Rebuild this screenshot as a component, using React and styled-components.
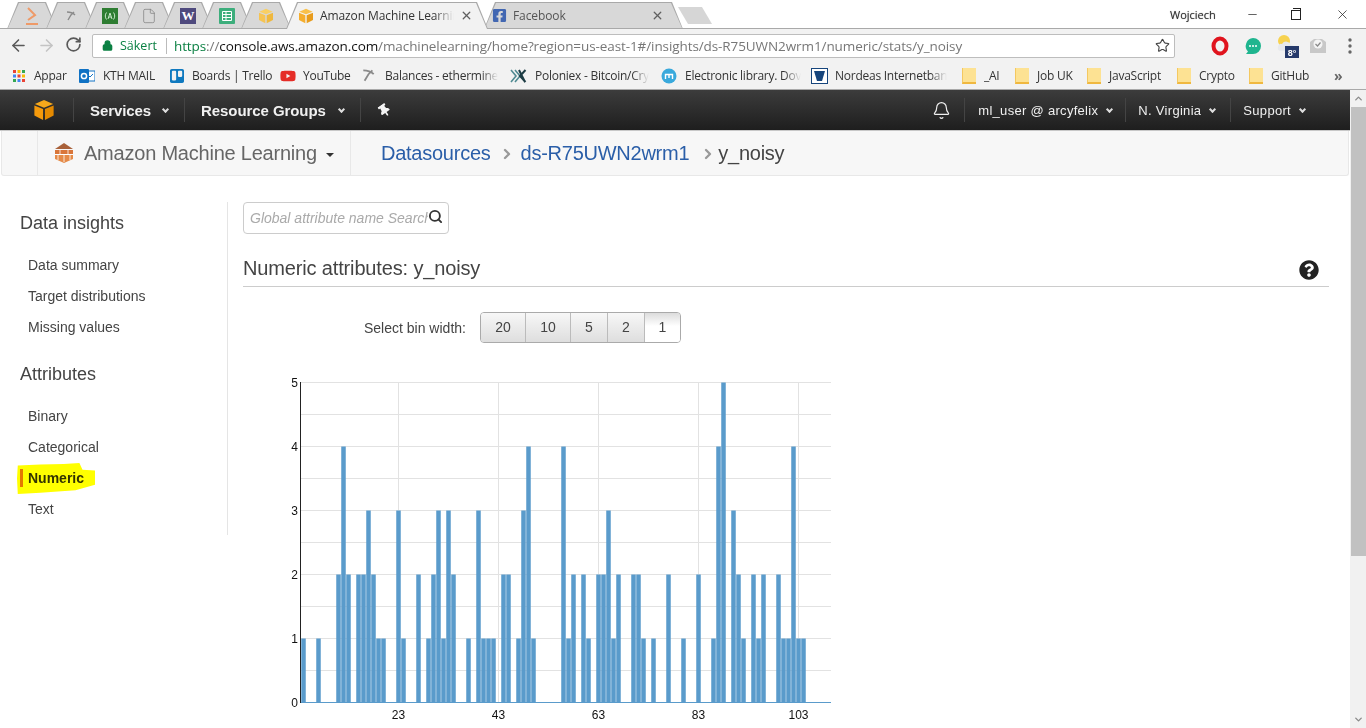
import React from 'react';
import styled, { createGlobalStyle } from 'styled-components';
import { ArrowLeft, ArrowRight, RotateCw, Star, Bell, Search, Minus, X, Lock, ChevronRight, ChevronUp, ChevronDown, File } from 'lucide-react';
import { FaFacebookSquare, FaTrello, FaQuestionCircle, FaThumbtack, FaYoutube } from 'react-icons/fa';

const GlobalStyle = createGlobalStyle`
  html, body {
    margin: 0;
    padding: 0;
    height: 100%;
    overflow: hidden;
    background: #ffffff;
    font-family: 'Liberation Sans', Arial, sans-serif;
  }
`;

const chromeFont = `'Open Sans', 'Noto Sans', sans-serif`;

const Shell = styled.div`
  width: 1366px;
  height: 728px;
  display: flex;
  flex-direction: column;
  overflow: hidden;
`;

/* browser chrome */
const TabStrip = styled.div`
  height: 28px;
  display: flex;
  align-items: flex-end;
  padding-left: 7px;
  background: #ffffff;
  border-bottom: 1px solid #a9a9a9;
  position: relative;
`;

const Tab = styled.div`
  width: ${p => p.$w}px;
  height: 27px;
  margin-left: ${p => p.$ml}px;
  margin-bottom: -1px;
  position: relative;
  z-index: ${p => (p.$active ? 3 : 1)};
  display: flex;
  align-items: center;
  justify-content: ${p => (p.$small ? 'center' : 'flex-start')};
  padding-left: ${p => p.$pl ?? 0}px;
  box-sizing: border-box;
  background: #a9a9a9;
  clip-path: polygon(0 100%, 11px 0, calc(100% - 11px) 0, 100% 100%);
  font: 12px ${chromeFont};
  letter-spacing: -0.1px;
  color: ${p => (p.$active ? '#333' : '#555')};
  &::before {
    content: '';
    position: absolute;
    inset: 1px 1px ${p => (p.$active ? 0 : 1)}px 1px;
    background: ${p => (p.$active ? '#f2f2f2' : '#d8d8d8')};
    clip-path: polygon(0 100%, 11px 0, calc(100% - 11px) 0, 100% 100%);
  }
  > * {
    position: relative;
  }
`;

const TabLabel = styled.span`
  width: ${p => p.$w}px;
  margin-left: ${p => p.$ml ?? 6}px;
  white-space: nowrap;
  -webkit-mask-image: linear-gradient(to right, #000 85%, transparent);
  mask-image: linear-gradient(to right, #000 85%, transparent);
`;

const TabClose = styled(X)`
  margin-left: ${p => p.$ml}px;
  color: #5f5f5f;
`;

const NewTab = styled.div`
  width: 34px;
  height: 17px;
  margin: 0 0 4px -5px;
  align-self: flex-end;
  background: #d6d6d6;
  clip-path: polygon(0 0, 24px 0, 34px 100%, 10px 100%);
`;

const WindowControls = styled.div`
  margin-left: auto;
  height: 28px;
  display: flex;
  align-items: center;
  color: #222;
  align-self: flex-start;
`;

const UserName = styled.span`
  font: 11px ${chromeFont};
  color: #333;
  width: 60px;
  text-shadow: 0 0 1px #888;
`;

const WindowButton = styled.span`
  width: ${p => p.$w}px;
  display: flex;
  justify-content: center;
`;

const RestoreIcon = styled.span`
  width: 8px;
  height: 8px;
  border: 1px solid #222;
  position: relative;
  margin-top: 2px;
  &::after {
    content: '';
    position: absolute;
    left: 1px;
    top: -3px;
    width: 7px;
    height: 7px;
    border-top: 1px solid #222;
    border-right: 1px solid #222;
  }
`;

const Toolbar = styled.div`
  height: 33px;
  display: flex;
  align-items: center;
  background: #f2f2f2;
`;

const NavIcons = styled.div`
  width: 92px;
  display: flex;
  flex: none;
  padding-left: 9px;
  box-sizing: border-box;
  gap: 9px;
  color: #5a5a5a;
`;

const NavIcon = styled.span`
  display: flex;
  color: ${p => (p.$off ? '#c4c4c4' : '#5a5a5a')};
`;

const AddressBar = styled.div`
  width: 1083px;
  height: 24px;
  box-sizing: border-box;
  flex: none;
  background: #ffffff;
  border: 1px solid #bdbdbd;
  border-radius: 2px;
  display: flex;
  align-items: center;
  padding-left: 9px;
  font: 13.5px ${chromeFont};
  position: relative;
`;

const Secure = styled.span`
  color: #0b8043;
  display: flex;
  align-items: center;
  gap: 7px;
  padding-right: 9px;
  border-right: 1px solid #bbb;
  height: 16px;
  line-height: 16px;
  font-size: 12.5px;
`;

const Url = styled.span`
  margin-left: 7px;
  color: #777;
  letter-spacing: -0.09px;
  white-space: nowrap;
`;

const UrlGreen = styled.span`
  color: #0b8043;
`;

const UrlDark = styled.span`
  color: #111;
`;

const StarSlot = styled.span`
  margin-left: auto;
  margin-right: 4px;
  display: flex;
  color: #444;
`;

const Extensions = styled.div`
  flex: 1;
  display: flex;
  align-items: center;
  padding-left: 36px;
`;

const ExtSlot = styled.span`
  width: ${p => p.$w}px;
  display: flex;
  flex: none;
`;

const Bookmarks = styled.div`
  height: 27px;
  display: flex;
  align-items: center;
  background: #f2f2f2;
  border-bottom: 1px solid #a9a9a9;
  box-sizing: content-box;
  font: 12px ${chromeFont};
  letter-spacing: -0.25px;
  color: #333;
  position: relative;
`;

const Bookmark = styled.div`
  width: ${p => p.$w}px;
  flex: none;
  display: flex;
  align-items: center;
  padding-left: ${p => p.$pl}px;
  box-sizing: border-box;
  gap: ${p => p.$gap}px;
  white-space: nowrap;
`;

const BookmarkText = styled.span`
  flex: none;
  ${p => p.$fade && `
    -webkit-mask-image: linear-gradient(to right, #000 85%, transparent);
    mask-image: linear-gradient(to right, #000 85%, transparent);
  `}
`;

const Folder = styled.span`
  width: 14px;
  height: 16px;
  flex: none;
  box-sizing: border-box;
  background: #fde293;
  border-bottom: 2px solid #f0b840;
  border-left: 1px solid #f4c860;
`;

const MoreBookmarks = styled.span`
  margin-left: 13px;
  font-size: 14px;
  color: #666;
  font-weight: 700;
`;

/* page */
const Viewport = styled.div`
  flex: 1;
  min-height: 0;
  display: flex;
`;

const Page = styled.div`
  width: 1350px;
  flex: none;
  display: flex;
  flex-direction: column;
`;

const Scrollbar = styled.div`
  flex: 1;
  background: #f1f1f1;
  display: flex;
  flex-direction: column;
  align-items: center;
  color: #8a8a8a;
`;

const ScrollEnd = styled.span`
  height: 17px;
  display: flex;
  align-items: center;
  justify-content: center;
  margin-top: ${p => (p.$bottom ? 'auto' : 0)};
`;

const ScrollThumb = styled.div`
  width: 15px;
  height: 449px;
  background: #c1c1c1;
`;

const TopNav = styled.div`
  height: 40px;
  display: flex;
  align-items: center;
  background: linear-gradient(#3c3c3c, #1e1e1e);
  border-bottom: 1px solid #c8c8c8;
  color: #f0f0f0;
`;

const NavCube = styled.div`
  width: 73px;
  flex: none;
  display: flex;
  justify-content: center;
  padding-left: 15px;
  box-sizing: border-box;
`;

const NavCell = styled.div`
  height: 24px;
  flex: none;
  display: flex;
  align-items: center;
  padding: 0 ${p => p.$pr ?? 16}px 0 ${p => p.$pl ?? 16}px;
  border-left: 1px solid #444;
  font-size: ${p => (p.$bold ? 15 : 13)}px;
  font-weight: ${p => (p.$bold ? 700 : 400)};
  letter-spacing: ${p => (p.$bold ? -0.08 : 0.3)}px;
  white-space: nowrap;
`;

const NavSpacer = styled.div`
  flex: 1;
`;

const Caret = styled.span`
  display: inline-block;
  margin-left: ${p => p.$ml ?? 9}px;
  width: 5px;
  height: 5px;
  border-right: 2px solid #ddd;
  border-bottom: 2px solid #ddd;
  box-sizing: border-box;
  transform: translateY(-1px) rotate(45deg);
`;

const PinIcon = styled(FaThumbtack)`
  transform: rotate(-35deg);
`;

const BellSlot = styled.div`
  display: flex;
  padding-right: 13px;
`;

const SubNav = styled.div`
  height: 44px;
  margin: 0 1px;
  display: flex;
  align-items: stretch;
  background: #f7f7f7;
  border: 1px solid #e8e8e8;
  border-top: none;
  border-radius: 0 0 3px 3px;
`;

const SubSpacer = styled.div`
  width: 35px;
  border-right: 1px solid #e8e8e8;
`;

const ServiceName = styled.div`
  width: 313px;
  box-sizing: border-box;
  display: flex;
  align-items: center;
  padding-left: 15px;
  gap: 9px;
  font-size: 20px;
  letter-spacing: -0.22px;
  color: #666;
  border-right: 1px solid #e8e8e8;
`;

const SolidCaret = styled.span`
  width: 0;
  height: 0;
  margin-top: 3px;
  border-left: 4px solid transparent;
  border-right: 4px solid transparent;
  border-top: 4px solid #333;
`;

const Crumbs = styled.div`
  display: flex;
  align-items: center;
  padding-left: 30px;
  font-size: 20px;
  letter-spacing: -0.25px;
  color: #444;
`;

const CrumbLink = styled.a`
  color: #2a5ea8;
  text-decoration: none;
`;

const CrumbArrow = styled(ChevronRight)`
  color: #999;
  margin: 2px ${p => p.$mr}px 0 ${p => p.$ml}px;
`;

const Columns = styled.div`
  display: flex;
  align-items: flex-start;
  padding-top: 26px;
`;

const Sidebar = styled.aside`
  width: 228px;
  height: 333px;
  flex: none;
  box-sizing: border-box;
  padding: 11px 0 0 20px;
  border-right: 1px solid #e5e5e5;
`;

const SideHeading = styled.h3`
  margin: ${p => (p.$next ? 21 : 0)}px 0 17px;
  font-size: 18px;
  line-height: 20px;
  font-weight: 400;
  color: #444;
`;

const SideItem = styled.div`
  height: 31px;
  line-height: 31px;
  padding-left: 8px;
  font-size: 14px;
  color: #444;
  position: relative;
  font-weight: ${p => (p.$active ? 700 : 400)};
  ${p => p.$active && `color: #333;`}
`;

const ActiveBar = styled.span`
  position: absolute;
  left: 0;
  top: 6px;
  width: 3px;
  height: 18px;
  background: #e47911;
`;

const Highlight = styled.span`
  position: absolute;
  left: -3px;
  top: 0;
  width: 78px;
  height: 31px;
  background: #ffff00;
  mix-blend-mode: multiply;
  clip-path: polygon(1% 8%, 30% 5%, 60% 3%, 80% 0, 84% 22%, 100% 24%, 100% 70%, 75% 88%, 30% 96%, 1% 100%, 0 50%);
`;

const Content = styled.main`
  width: 1086px;
  margin-left: 15px;
  flex: none;
`;

const SearchBox = styled.div`
  width: 206px;
  height: 32px;
  box-sizing: border-box;
  border: 1px solid #ccc;
  border-radius: 4px;
  display: flex;
  align-items: center;
  position: relative;
  padding-left: 6px;
  color: #333;
`;

const SearchText = styled.span`
  width: 178px;
  flex: none;
  overflow: hidden;
  white-space: nowrap;
  font-style: italic;
  font-size: 14px;
  color: #aaa;
`;

const SearchIcon = styled(Search)`
  margin: -4px 0 0 0;
`;

const TitleRow = styled.div`
  margin-top: 19px;
  height: 33px;
  box-sizing: content-box;
  display: flex;
  align-items: center;
  justify-content: space-between;
  border-bottom: 1px solid #ccc;
  padding: 0 10px 0 0;
`;

const Title = styled.h2`
  margin: 0 0 3px;
  font-size: 20px;
  letter-spacing: -0.15px;
  font-weight: 400;
  color: #444;
`;

const BinRow = styled.div`
  margin-top: 25px;
  padding-left: 121px;
  display: flex;
  align-items: center;
  gap: 14px;
  font-size: 14px;
  color: #444;
`;

const BinGroup = styled.div`
  display: flex;
  border: 1px solid #aaa;
  border-radius: 4px;
  overflow: hidden;
`;

const BinButton = styled.div`
  width: ${p => p.$w}px;
  height: 29px;
  line-height: 29px;
  text-align: center;
  font-size: 14px;
  color: #444;
  border-left: ${p => (p.$first ? 'none' : '1px solid #bbb')};
  background: ${p => (p.$active ? 'linear-gradient(#dcdcdc, #ffffff 45%)' : 'linear-gradient(#f7f7f7, #dedede)')};
`;

const ChartSvg = styled.svg`
  display: block;
  margin: 32px 0 0 42px;
`;

const ChartLabel = styled.text`
  font-family: 'Liberation Sans', Arial, sans-serif;
  font-size: 12px;
  fill: #111;
`;

const Cube = ({ size = 22, top = '#f7a81b', left = '#f59a0c', right = '#e58a00' }) => (
  <svg width={size} height={size} viewBox="0 0 24 24">
    <path d="M12 1 2 5.5 12 9.5 22 5.5Z" fill={top} />
    <path d="M1.5 7V18L11 23V11Z" fill={left} />
    <path d="M22.5 7V18L13 23V11Z" fill={right} />
  </svg>
);

const MlIcon = () => (
  <svg width="22" height="22" viewBox="0 0 22 22">
    <path d="M11 1 20 7H2Z" fill="#a9613a" />
    <path d="M2 8h18v4H2z" fill="#d9763a" />
    <path d="M2 13h18v4l-9 4-9-4z" fill="#e58a48" />
    <path d="M7 8v4M15 8v4M5 13v5M11 13v7M17 13v5M2 12.5h18" stroke="#fff" strokeWidth=".8" />
  </svg>
);

const SublimeIcon = () => (
  <svg width="14" height="20" viewBox="0 0 14 20">
    <path d="M3 2 10 9 3 14" fill="none" stroke="#ee9a68" strokeWidth="2" />
    <path d="M1 18h12" stroke="#ee9a68" strokeWidth="2" />
  </svg>
);

const PickIcon = ({ size = 10 }) => (
  <svg width={size} height={size} viewBox="0 0 10 10">
    <path d="M1 1c3 0 6 1 8 3M8 1 5 4 2 9" fill="none" stroke="#8a8a8a" strokeWidth="1.4" />
  </svg>
);

const CodeCampIcon = () => (
  <svg width="16" height="16" viewBox="0 0 16 16">
    <rect width="16" height="16" fill="#2e7d32" />
    <path d="M4.5 4.5c-1.6 2-1.6 5 0 7M11.5 4.5c1.6 2 1.6 5 0 7M6 11l2-6 2 6M6.8 9h2.4" fill="none" stroke="#c8e6c9" strokeWidth="1" />
  </svg>
);

const WorkFlowy = styled.span`
  width: 16px;
  height: 16px;
  background: #4f4a7e;
  color: #fff;
  font: 700 13px/16px 'Liberation Serif', serif;
  text-align: center;
`;

const SheetIcon = () => (
  <svg width="16" height="16" viewBox="0 0 16 16">
    <rect width="16" height="16" rx="1" fill="#3dae7c" />
    <path d="M3.5 3.5h9v9h-9zM3.5 6.5h9M3.5 9.5h9M7 3.5v9" fill="none" stroke="#fff" strokeWidth="1" />
  </svg>
);

const GridIcon = () => (
  <svg width="12" height="12" viewBox="0 0 12 12">
    {[
      ['#ea4335', '#fbbc05', '#34a853'],
      ['#4285f4', '#ea4335', '#fbbc05'],
      ['#34a853', '#4285f4', '#ea4335'],
    ].map((row, r) =>
      row.map((c, i) => <rect key={`${r}-${i}`} x={i * 4.5} y={r * 4.5} width="3" height="3" fill={c} />)
    )}
  </svg>
);

const OutlookIcon = () => (
  <svg width="16" height="16" viewBox="0 0 16 16">
    <rect x="6" y="3" width="10" height="10" fill="#fff" stroke="#1072c4" />
    <path d="M8 6l3 3 3-3" fill="none" stroke="#1072c4" />
    <rect y="1" width="10" height="14" rx="1" fill="#1072c4" />
    <circle cx="5" cy="8" r="2.6" fill="none" stroke="#fff" strokeWidth="1.5" />
  </svg>
);

const PoloniexIcon = () => (
  <svg width="17" height="14" viewBox="0 0 17 14">
    <path d="M1 1 6 7 1 13M5 1l5 6-5 6" fill="none" stroke="#4f8a92" strokeWidth="1.6" />
    <path d="M15.5 1 10 7l5.500 6M9 1l6 12" fill="none" stroke="#1d3c44" strokeWidth="2" />
  </svg>
);

const LibraryIcon = () => (
  <svg width="16" height="16" viewBox="0 0 16 16">
    <circle cx="8" cy="8" r="7.5" fill="#39a9dc" />
    <path d="M4.500 11V6.500h7V11M8 6.500V10" fill="none" stroke="#fff" strokeWidth="1.4" />
  </svg>
);

const NordeaIcon = () => (
  <svg width="17" height="16" viewBox="0 0 17 16">
    <rect x=".5" y=".5" width="16" height="15" fill="#fff" stroke="#16457c" />
    <path d="M3 3h11l-3 10H6z" fill="#16457c" />
  </svg>
);

const OperaIcon = () => (
  <svg width="18" height="20" viewBox="0 0 18 20">
    <ellipse cx="9" cy="10" rx="6.500" ry="7.500" fill="none" stroke="#e0141e" strokeWidth="4" />
  </svg>
);

const ChatIcon = () => (
  <svg width="18" height="18" viewBox="0 0 18 18">
    <path d="M9 1a8 8 0 0 1 0 16H2l2-2.500A8 8 0 0 1 9 1Z" fill="#1fb58f" />
    <circle cx="6" cy="9" r="1" fill="#fff" />
    <circle cx="9" cy="9" r="1" fill="#fff" />
    <circle cx="12" cy="9" r="1" fill="#fff" />
  </svg>
);

const WeatherIcon = () => (
  <svg width="24" height="24" viewBox="0 0 24 24">
    <circle cx="9" cy="7" r="6" fill="#f7d24f" />
    <path d="M3 13a3 3 0 0 1 4-3 5 5 0 0 1 9 1 3 3 0 0 1 1 6H5a3 3 0 0 1-2-4Z" fill="#e8eaed" />
    <rect x="10" y="12" width="14" height="12" fill="#263a6b" />
    <text x="17" y="21.500" textAnchor="middle" fill="#fff" fontSize="9" fontWeight="700" fontFamily="Liberation Sans, sans-serif">8°</text>
  </svg>
);

const MailCheckIcon = () => (
  <svg width="18" height="16" viewBox="0 0 18 16">
    <path d="M1 4 5 1h8l4 3v11H1Z" fill="#c8c8c8" />
    <circle cx="9" cy="6" r="4.500" fill="#f4f4f4" />
    <path d="M6.500 6l2 2 3-3.500" fill="none" stroke="#888" strokeWidth="1.2" />
  </svg>
);

const Dots = () => (
  <svg width="4" height="16" viewBox="0 0 4 16">
    <circle cx="2" cy="2" r="1.700" fill="#666" />
    <circle cx="2" cy="8" r="1.700" fill="#666" />
    <circle cx="2" cy="14" r="1.700" fill="#666" />
  </svg>
);

// bin start value -> count, read off the histogram
const bins = {
  4: 1, 7: 1, 11: 2, 12: 4, 13: 2, 15: 2, 16: 2, 17: 3, 18: 2, 19: 1, 20: 1, 23: 3, 24: 1, 27: 2,
  29: 1, 30: 2, 31: 3, 32: 1, 33: 3, 34: 2, 37: 1, 39: 3, 40: 1, 41: 1, 42: 1, 44: 2, 45: 2, 47: 1,
  48: 3, 49: 4, 50: 1, 56: 4, 57: 1, 58: 2, 60: 2, 61: 1, 63: 2, 64: 2, 65: 3, 66: 1, 67: 2, 70: 2,
  71: 2, 72: 1, 74: 1, 77: 2, 80: 1, 83: 2, 86: 1, 87: 4, 88: 5, 90: 3, 91: 2, 92: 1, 94: 2, 95: 1,
  96: 2, 99: 2, 100: 1, 101: 1, 102: 4, 103: 1, 104: 1,
};

const xOf = v => 398.5 + (v - 23) * 5;
const yOf = n => 702.5 - n * 64;

const Histogram = () => (
  <ChartSvg width="560" height="353" viewBox="285 375 560 353">
    {[0.5, 1, 1.5, 2, 2.5, 3, 3.5, 4, 4.5, 5].map(n => (
      <line key={n} x1="300" x2="831" y1={yOf(n)} y2={yOf(n)} stroke="#e2e2e2" />
    ))}
    {[23, 43, 63, 83, 103].map(v => (
      <line key={v} x1={xOf(v)} x2={xOf(v)} y1="382" y2="702" stroke="#e2e2e2" />
    ))}
    {Object.entries(bins).map(([v, n]) => (
      <rect key={v} x={xOf(+v) - 2.25} y={yOf(n)} width="4.5" height={n * 64} fill="#5a9bcb" />
    ))}
    <line x1="301" x2="831" y1="702.5" y2="702.5" stroke="#5a9bcb" />
    <line x1="300.5" x2="300.5" y1="382" y2="703" stroke="#222" />
    {[0, 1, 2, 3, 4, 5].map(n => (
      <ChartLabel key={n} x="298" y={yOf(n) + 4} textAnchor="end">{n}</ChartLabel>
    ))}
    {[23, 43, 63, 83, 103].map(v => (
      <ChartLabel key={v} x={xOf(v)} y="719" textAnchor="middle">{v}</ChartLabel>
    ))}
  </ChartSvg>
);

const folders = [
  { name: '_AI', w: 53 },
  { name: 'Job UK', w: 72 },
  { name: 'JavaScript', w: 90 },
  { name: 'Crypto', w: 72 },
  { name: 'GitHub', w: 72 },
];

const App = () => (
  <Shell>
    <GlobalStyle />
    <TabStrip>
      <Tab $small $w={50} $ml={0}><SublimeIcon /></Tab>
      <Tab $small $w={50} $ml={-11}><PickIcon /></Tab>
      <Tab $small $w={50} $ml={-11}><CodeCampIcon /></Tab>
      <Tab $small $w={50} $ml={-11}><File size={16} color="#777" strokeWidth={1} /></Tab>
      <Tab $small $w={50} $ml={-11}><WorkFlowy>W</WorkFlowy></Tab>
      <Tab $small $w={50} $ml={-11}><SheetIcon /></Tab>
      <Tab $small $w={50} $ml={-11}><Cube size={16} top="#f9cf63" left="#f6c453" right="#efb83e" /></Tab>
      <Tab $active $w={202} $ml={-5} $pl={12}>
        <Cube size={16} top="#f9c04a" left="#f5ae2e" right="#e89c1c" />
        <TabLabel $w={134}>Amazon Machine Learnin</TabLabel>
        <TabClose size={13} $ml={6} strokeWidth={2.4} />
      </Tab>
      <Tab $w={199} $ml={-4} $pl={8}>
        <FaFacebookSquare size={15} color="#4267b2" />
        <TabLabel $w={131} $ml={6}>Facebook</TabLabel>
        <TabClose size={13} $ml={7} strokeWidth={2.4} />
      </Tab>
      <NewTab />
      <WindowControls>
        <UserName>Wojciech</UserName>
        <WindowButton $w={44}><Minus size={13} strokeWidth={1.3} /></WindowButton>
        <WindowButton $w={44}><RestoreIcon /></WindowButton>
        <WindowButton $w={48}><X size={15} strokeWidth={1.2} /></WindowButton>
      </WindowControls>
    </TabStrip>

    <Toolbar>
      <NavIcons>
        <NavIcon><ArrowLeft size={19} /></NavIcon>
        <NavIcon $off><ArrowRight size={19} /></NavIcon>
        <NavIcon><RotateCw size={17} strokeWidth={2.4} /></NavIcon>
      </NavIcons>
      <AddressBar>
        <Secure><Lock size={11} strokeWidth={3} fill="#0b8043" />Säkert</Secure>
        <Url>
          <UrlGreen>https</UrlGreen>://<UrlDark>console.aws.amazon.com</UrlDark>/machinelearning/home?region=us-east-1#/insights/ds-R75UWN2wrm1/numeric/stats/y_noisy
        </Url>
        <StarSlot><Star size={15} strokeWidth={1.8} /></StarSlot>
      </AddressBar>
      <Extensions>
        <ExtSlot $w={33}><OperaIcon /></ExtSlot>
        <ExtSlot $w={31}><ChatIcon /></ExtSlot>
        <ExtSlot $w={34}><WeatherIcon /></ExtSlot>
        <ExtSlot $w={39}><MailCheckIcon /></ExtSlot>
        <ExtSlot $w={10}><Dots /></ExtSlot>
      </Extensions>
    </Toolbar>

    <Bookmarks>
      <Bookmark $w={73} $pl={13} $gap={9}><GridIcon /><BookmarkText>Appar</BookmarkText></Bookmark>
      <Bookmark $w={90} $pl={6} $gap={8}><OutlookIcon /><BookmarkText>KTH MAIL</BookmarkText></Bookmark>
      <Bookmark $w={111} $pl={6} $gap={7}><FaTrello size={16} color="#0f79bf" /><BookmarkText>Boards | Trello</BookmarkText></Bookmark>
      <Bookmark $w={82} $pl={6} $gap={7}><FaYoutube size={16} color="#e52d27" /><BookmarkText>YouTube</BookmarkText></Bookmark>
      <Bookmark $w={154} $pl={6} $gap={10}><PickIcon size={13} /><BookmarkText $fade>Balances - ethermine</BookmarkText></Bookmark>
      <Bookmark $w={151} $pl={0} $gap={8}><PoloniexIcon /><BookmarkText $fade>Poloniex - Bitcoin/Cry</BookmarkText></Bookmark>
      <Bookmark $w={150} $pl={0} $gap={8}><LibraryIcon /><BookmarkText $fade>Electronic library. Dov</BookmarkText></Bookmark>
      <Bookmark $w={151} $pl={0} $gap={7}><NordeaIcon /><BookmarkText $fade>Nordeas Internetban</BookmarkText></Bookmark>
      {folders.map(f => (
        <Bookmark key={f.name} $w={f.w} $pl={0} $gap={8}>
          <Folder />
          <BookmarkText>{f.name}</BookmarkText>
        </Bookmark>
      ))}
      <MoreBookmarks>»</MoreBookmarks>
    </Bookmarks>

    <Viewport>
      <Page>
        <TopNav>
          <NavCube><Cube size={22} /></NavCube>
          <NavCell $bold>Services<Caret $ml={12} /></NavCell>
          <NavCell $bold>Resource Groups<Caret $ml={13} /></NavCell>
          <NavCell $pl={17}><PinIcon size={13} color="#f4f4f4" /></NavCell>
          <NavSpacer />
          <BellSlot><Bell size={19} strokeWidth={1.5} /></BellSlot>
          <NavCell $pl={13} $pr={13}>ml_user @ arcyfelix<Caret /></NavCell>
          <NavCell $pl={12} $pr={15}>N. Virginia<Caret /></NavCell>
          <NavCell $pl={12} $pr={45}>Support<Caret /></NavCell>
        </TopNav>
        <SubNav>
          <SubSpacer />
          <ServiceName>
            <MlIcon />
            <span>Amazon Machine Learning</span>
            <SolidCaret />
          </ServiceName>
          <Crumbs>
            <CrumbLink>Datasources</CrumbLink>
            <CrumbArrow size={16} strokeWidth={3.5} $ml={8} $mr={6} />
            <CrumbLink>ds-R75UWN2wrm1</CrumbLink>
            <CrumbArrow size={16} strokeWidth={3.5} $ml={11} $mr={2} />
            <span>y_noisy</span>
          </Crumbs>
        </SubNav>
        <Columns>
          <Sidebar>
            <SideHeading>Data insights</SideHeading>
            <SideItem>Data summary</SideItem>
            <SideItem>Target distributions</SideItem>
            <SideItem>Missing values</SideItem>
            <SideHeading $next>Attributes</SideHeading>
            <SideItem>Binary</SideItem>
            <SideItem>Categorical</SideItem>
            <SideItem $active>
              <ActiveBar />
              Numeric
              <Highlight />
            </SideItem>
            <SideItem>Text</SideItem>
          </Sidebar>
          <Content>
            <SearchBox>
              <SearchText>Global attribute name Search</SearchText>
              <SearchIcon size={15} strokeWidth={3} />
            </SearchBox>
            <TitleRow>
              <Title>Numeric attributes: y_noisy</Title>
              <FaQuestionCircle size={20} color="#222" />
            </TitleRow>
            <BinRow>
              <span>Select bin width:</span>
              <BinGroup>
                <BinButton $first $w={44}>20</BinButton>
                <BinButton $w={44}>10</BinButton>
                <BinButton $w={36}>5</BinButton>
                <BinButton $w={36}>2</BinButton>
                <BinButton $w={35} $active>1</BinButton>
              </BinGroup>
            </BinRow>
            <Histogram />
          </Content>
        </Columns>
      </Page>
      <Scrollbar>
        <ScrollEnd><ChevronUp size={11} strokeWidth={3} /></ScrollEnd>
        <ScrollThumb />
        <ScrollEnd $bottom><ChevronDown size={11} strokeWidth={3} /></ScrollEnd>
      </Scrollbar>
    </Viewport>
  </Shell>
);

export default App;
